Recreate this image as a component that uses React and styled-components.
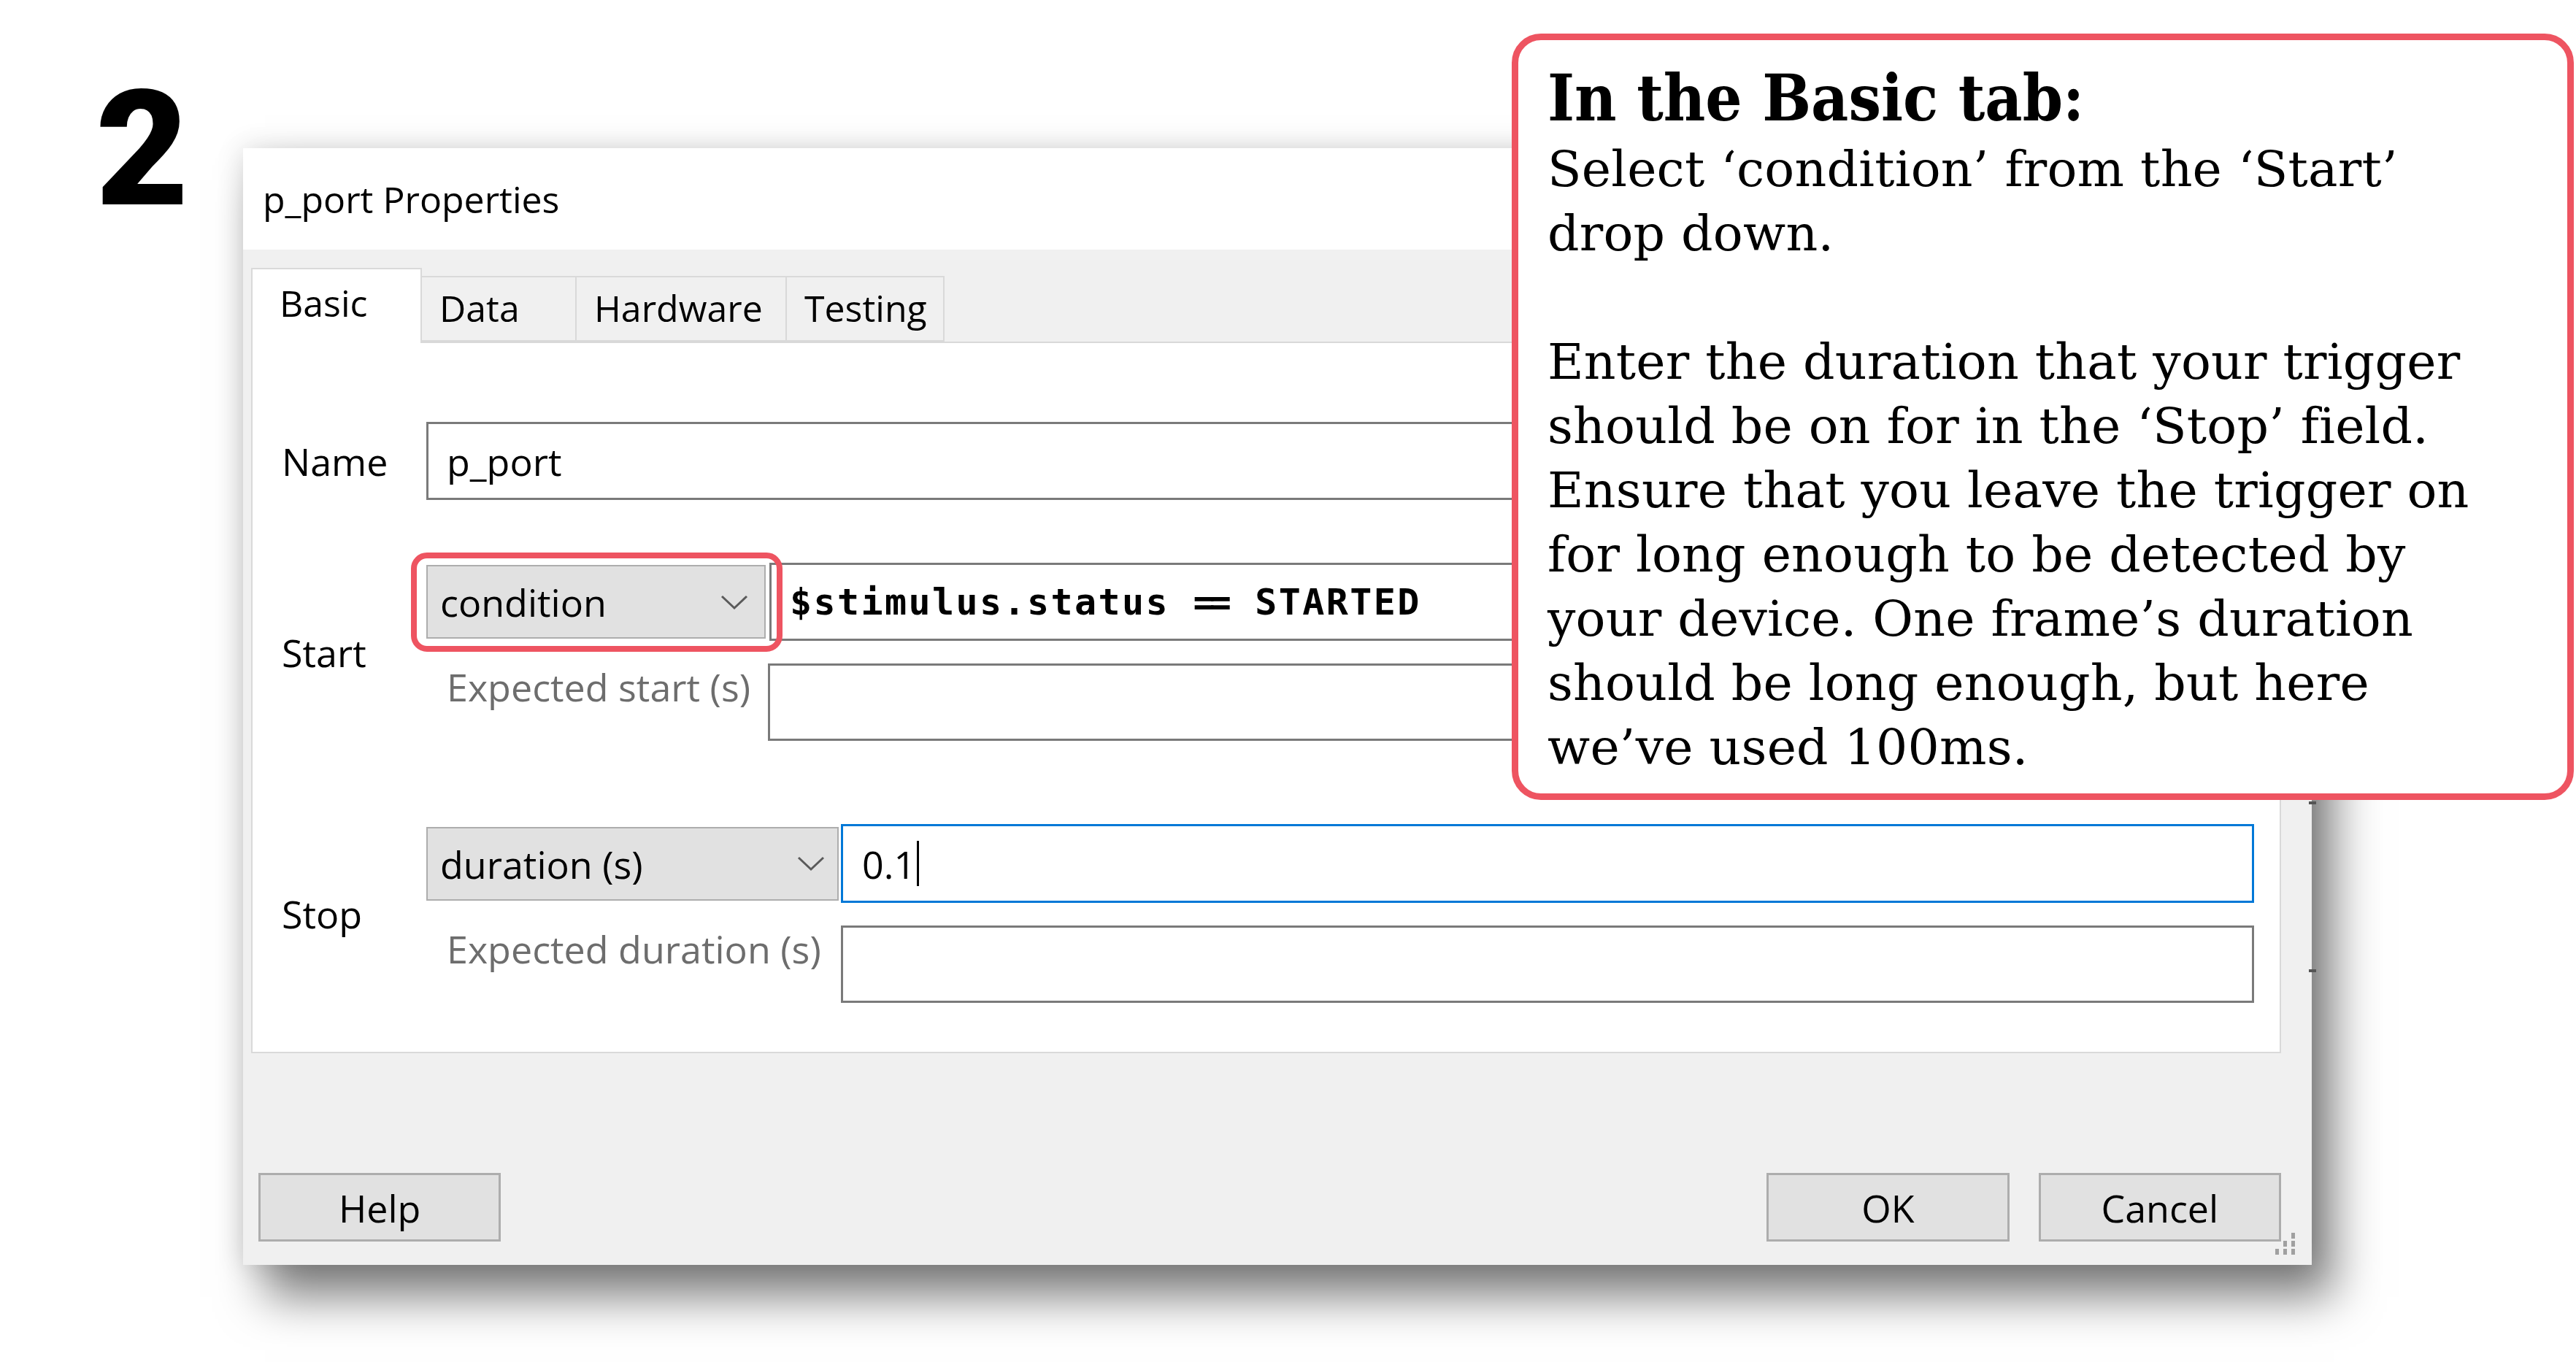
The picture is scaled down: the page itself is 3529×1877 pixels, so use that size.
import styled, { createGlobalStyle } from "styled-components";

const GlobalStyle = createGlobalStyle`
  body {
    margin: 0;
    background: #ffffff;
  }
`;

const Page = styled.div`
  position: relative;
  width: 3529px;
  height: 1877px;
  background: #ffffff;
  display: flex;
  align-items: flex-start;
  overflow: hidden;
`;

const StepNumber = styled.div`
  width: 333px;
  box-sizing: border-box;
  padding-left: 131px;
  margin-top: 95px;
  font-family: "Roboto", "Liberation Sans", sans-serif;
  font-weight: 900;
  font-size: 220px;
  line-height: 1;
  color: #000;
`;

const Dialog = styled.div`
  position: relative;
  margin-top: 203px;
  width: 2834px;
  height: 1530px;
  background: #f0f0f0;
  display: flex;
  flex-direction: column;
  box-shadow: 30px 44px 60px rgba(0, 0, 0, 0.5), 0 0 36px rgba(0, 0, 0, 0.14);
  font-family: "Open Sans", "Noto Sans", sans-serif;
  color: #000;
`;

const TitleBar = styled.div`
  height: 139px;
  background: #ffffff;
  display: flex;
  align-items: center;
  padding-left: 27px;
  font-size: 50px;
`;

const Body = styled.div`
  flex: 1;
  display: flex;
  flex-direction: column;
  padding: 25px 42px 32px 11px;
`;

const TabRow = styled.div`
  display: flex;
  align-items: flex-end;
  height: 101px;
  position: relative;
  z-index: 1;
`;

const Tab = styled.div`
  box-sizing: border-box;
  width: ${(p) => p.$w}px;
  height: ${(p) => (p.$active ? 103 : 90)}px;
  margin-bottom: ${(p) => (p.$active ? -2 : 0)}px;
  background: ${(p) => (p.$active ? "#ffffff" : "#f0f0f0")};
  border: 2px solid #d9d9d9;
  border-bottom: ${(p) => (p.$active ? "none" : "2px solid #d9d9d9")};
  border-left: ${(p) => (p.$first || p.$active ? "2px solid #d9d9d9" : "none")};
  padding-left: ${(p) => (p.$active ? 37 : 24)}px;
  padding-top: ${(p) => (p.$active ? 16 : 12)}px;
  font-size: 50px;
  line-height: 60px;
`;

const Panel = styled.div`
  box-sizing: border-box;
  height: 975px;
  background: #ffffff;
  border: 2px solid #d9d9d9;
  padding: 108px 35px 0 40px;
  display: flex;
  flex-direction: column;
`;

const FormRow = styled.div`
  display: grid;
  grid-template-columns: 198px 1fr;
  align-items: center;
  margin-top: ${(p) => p.$top || 0}px;
`;

const Label = styled.div`
  font-size: 52px;
  line-height: 60px;
  padding-top: ${(p) => p.$dy || 0}px;
`;

const Section = styled.div`
  display: grid;
  grid-template-columns: ${(p) => p.$col}px 1fr;
  row-gap: 31px;
  align-items: center;
`;

const TextBox = styled.div`
  box-sizing: border-box;
  height: ${(p) => p.$h || 107}px;
  background: #ffffff;
  border: ${(p) => (p.$focus ? "3px solid #0078d7" : "3px solid #7a7a7a")};
  display: flex;
  align-items: center;
  padding-left: ${(p) => p.$pad || 25}px;
  font-size: 52px;
  margin-left: ${(p) => p.$ml || 0}px;
`;

const Code = styled.span`
  font-family: "DejaVu Sans Mono", "Liberation Mono", monospace;
  font-weight: bold;
  font-size: 50px;
  letter-spacing: 2.4px;
`;

const Eq = styled.span`
  letter-spacing: -8px;
  padding-right: 8px;
`;

const Caret = styled.span`
  display: inline-block;
  width: 3px;
  height: 62px;
  background: #000;
  margin-left: 2px;
`;

const SelectWrap = styled.div`
  position: relative;
  width: ${(p) => p.$w}px;
`;

const Select = styled.div`
  box-sizing: border-box;
  height: 101px;
  background: #e1e1e1;
  border: 2px solid #adadad;
  display: flex;
  align-items: center;
  justify-content: space-between;
  padding: 0 ${(p) => p.$pr || 22}px 0 17px;
  font-size: 52px;
`;

const Highlight = styled.div`
  position: absolute;
  left: -21px;
  top: -17px;
  right: -23px;
  bottom: -18px;
  border: 8px solid #ee5461;
  border-radius: 22px;
  pointer-events: none;
`;

const SubLabel = styled.div`
  align-self: start;
  margin-top: 2px;
  font-size: 52px;
  line-height: 60px;
  color: #6d6d6d;
  padding-left: 28px;
`;

const ButtonRow = styled.div`
  display: flex;
  align-items: center;
  margin-top: 164px;
  padding-left: 10px;
`;

const Button = styled.div`
  box-sizing: border-box;
  width: 333px;
  height: 94px;
  background: #e1e1e1;
  border: 3px solid #adadad;
  display: flex;
  align-items: center;
  justify-content: center;
  font-size: 52px;
  margin-left: ${(p) => p.$ml || 0}px;
`;

const Grip = styled.svg`
  position: absolute;
  right: 20px;
  bottom: 10px;
`;

const EdgeTick = styled.div`
  position: absolute;
  right: -6px;
  top: ${(p) => p.$top}px;
  width: 10px;
  height: 4px;
  background: #555;
`;

const Callout = styled.div`
  position: absolute;
  left: 2071px;
  top: 46px;
  width: 1455px;
  height: 1050px;
  box-sizing: border-box;
  background: #ffffff;
  border: 9px solid #ee5461;
  border-radius: 40px;
  padding: 31px 20px 0 40px;
  color: #000;
`;

const CalloutTitle = styled.div`
  font-family: "DejaVu Serif Condensed", "DejaVu Serif", serif;
  font-stretch: condensed;
  font-weight: bold;
  font-size: 88px;
  line-height: 96px;
`;

const CalloutText = styled.div`
  margin-top: 6px;
  font-family: "DejaVu Serif", serif;
  font-size: 68px;
  line-height: 88px;
  letter-spacing: 0.2px;
`;

const Line = styled.div`
  white-space: nowrap;
  height: 88px;
`;

function Chevron() {
  return (
    <svg width="38" height="22" viewBox="0 0 38 22">
      <polyline points="2,3 19,19 36,3" fill="none" stroke="#5a5a5a" strokeWidth="3" />
    </svg>
  );
}

const textLines = [
  "Select \u2018condition\u2019 from the \u2018Start\u2019",
  "drop down.",
  "",
  "Enter the duration that your trigger",
  "should be on for in the \u2018Stop\u2019 field.",
  "Ensure that you leave the trigger on",
  "for long enough to be detected by",
  "your device. One frame\u2019s duration",
  "should be long enough, but here",
  "we\u2019ve used 100ms.",
];

export default function App() {
  return (
    <Page>
      <GlobalStyle />
      <StepNumber>2</StepNumber>
      <Dialog>
        <TitleBar>p_port Properties</TitleBar>
        <Body>
          <TabRow>
            <Tab $w={234} $active $first>Basic</Tab>
            <Tab $w={212}>Data</Tab>
            <Tab $w={288}>Hardware</Tab>
            <Tab $w={216}>Testing</Tab>
          </TabRow>
          <Panel>
            <FormRow>
              <Label>Name</Label>
              <TextBox>p_port</TextBox>
            </FormRow>
            <FormRow $top={86}>
              <Label $dy={2}>Start</Label>
              <Section $col={468}>
                <SelectWrap $w={465}>
                  <Select>
                    condition
                    <Chevron />
                  </Select>
                  <Highlight />
                </SelectWrap>
                <TextBox $ml={2}>
                  <Code>
                    $stimulus.status <Eq>==</Eq> STARTED
                  </Code>
                </TextBox>
                <SubLabel>Expected start (s)</SubLabel>
                <TextBox $h={106} />
              </Section>
            </FormRow>
            <FormRow $top={114}>
              <Label $dy={0}>Stop</Label>
              <Section $col={568}>
                <SelectWrap $w={565}>
                  <Select $pr={17}>
                    duration (s)
                    <Chevron />
                  </Select>
                </SelectWrap>
                <TextBox $focus $pad={26} $h={108}>
                  0.1
                  <Caret />
                </TextBox>
                <SubLabel>Expected duration (s)</SubLabel>
                <TextBox $h={106} />
              </Section>
            </FormRow>
          </Panel>
          <ButtonRow>
            <Button>Help</Button>
            <Button $ml={1734}>OK</Button>
            <Button $ml={40}>Cancel</Button>
          </ButtonRow>
        </Body>
        <Grip width="40" height="36" viewBox="0 0 40 36">
          {[
            [32, 2],
            [32, 13],
            [21, 13],
            [32, 24],
            [21, 24],
            [10, 24],
          ].map(([x, y]) => (
            <rect key={`${x}-${y}`} x={x} y={y} width="5" height="8" fill="#a0a0a0" />
          ))}
        </Grip>
        <EdgeTick $top={895} />
        <EdgeTick $top={1125} />
      </Dialog>
      <Callout>
        <CalloutTitle>In the Basic tab:</CalloutTitle>
        <CalloutText>
          {textLines.map((t, i) => (
            <Line key={i}>{t}</Line>
          ))}
        </CalloutText>
      </Callout>
    </Page>
  );
}
